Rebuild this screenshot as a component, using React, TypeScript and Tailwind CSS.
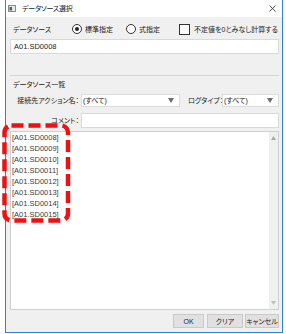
import React from "react";

const FONT = "[font-family:'Liberation_Sans','Noto_Sans_CJK_JP',sans-serif] [font-feature-settings:'palt']";

function Radio({ checked }: { checked?: boolean }) {
  return (
    <span className="w-[10px] h-[10px] rounded-full border border-[#333] bg-white flex items-center justify-center shrink-0">
      {checked && <span className="w-[4px] h-[4px] rounded-full bg-[#222]" />}
    </span>
  );
}

function Combo({ className }: { className: string }) {
  return (
    <div className={`h-[13px] bg-white border border-[#dcdcdc] flex items-center justify-between ${className}`}>
      <span className="pl-[1px] text-[7px] text-[#222] leading-none whitespace-nowrap">(すべて)</span>
      <svg width="6" height="5" viewBox="0 0 6 5" className="mr-[5px]">
        <path d="M0 0 H6 L3 5 Z" fill="#6d6d6d" />
      </svg>
    </div>
  );
}

const items = [
  "[A01.SD0008]",
  "[A01.SD0009]",
  "[A01.SD0010]",
  "[A01.SD0011]",
  "[A01.SD0012]",
  "[A01.SD0013]",
  "[A01.SD0014]",
  "[A01.SD0015]",
];

export default function App() {
  return (
    <div className={`relative w-[286px] h-[334px] bg-white overflow-hidden whitespace-nowrap ${FONT}`}>
      <div className="ml-[5px] w-[278px] h-[333px] border-x border-b border-[#2a84d2] flex flex-col bg-[#f0f0f0]">
        {/* title bar */}
        <div className="h-[17px] bg-white flex items-center shrink-0">
          <svg width="8" height="7" viewBox="0 0 8 7" className="ml-[2px]">
            <rect x="0.5" y="0.5" width="7" height="6" fill="#e8e8e8" stroke="#8a8a8a" />
            <rect x="1.5" y="2" width="2.5" height="3.5" fill="#3a6f4a" />
          </svg>
          <span className="ml-[6px] text-[7px] text-[#222] leading-none tracking-[-0.2px]">データソース選択</span>
          <svg width="7" height="7" viewBox="0 0 7 7" className="ml-auto mr-[6px]">
            <path d="M0.5 0.5 L6.5 6.5 M6.5 0.5 L0.5 6.5" stroke="#333" strokeWidth="0.9" />
          </svg>
        </div>

        {/* body */}
        <div className="flex-1 flex flex-col pl-[4px] pr-[3px]">
          {/* row 1 */}
          <div className="mt-[4px] h-[16px] flex items-center text-[7px] text-[#222] leading-none">
            <span className="w-[62px] pl-[3px] shrink-0">データソース</span>
            <Radio checked />
            <span className="ml-[3px] w-[41px]">標準指定</span>
            <Radio />
            <span className="ml-[3px] w-[40px]">式指定</span>
            <span className="w-[11px] h-[11px] border border-[#333] bg-white shrink-0" />
            <span className="ml-[4px]">不定値を0とみなし計算する</span>
          </div>

          {/* text box */}
          <div className="mt-[2px] h-[15px] bg-white border border-[#d9d9d9] flex items-center pl-[3px] text-[7.5px] text-[#222] leading-none">
            A01.SD0008
          </div>

          {/* separator */}
          <div className="mt-[21px] h-px bg-[#d6d6d6]" />

          <div className="mt-[3px] h-[10px] flex items-center pl-[3px] text-[7px] text-[#222] leading-none">
            データソース一覧
          </div>

          {/* combos */}
          <div className="mt-[5px] h-[13px] flex items-center text-[7px] text-[#222] leading-none">
            <span className="w-[69px] text-right shrink-0">接続先アクション名：</span>
            <Combo className="ml-[2px] w-[99px] shrink-0" />
            <span className="ml-[8px] w-[34px] shrink-0">ログタイプ：</span>
            <Combo className="flex-1 min-w-0" />
          </div>

          {/* comment */}
          <div className="mt-[6px] h-[15px] flex items-center text-[7px] text-[#222] leading-none">
            <span className="w-[69px] text-right shrink-0">コメント：</span>
            <div className="ml-[2px] flex-1 h-[15px] bg-white border border-[#d9d9d9]" />
          </div>

          {/* list */}
          <div className="mt-[3px] h-[179px] bg-white border border-[#cfcfcf] flex">
            <div className="flex-1 pl-[1px] flex flex-col">
              {items.map((t) => (
                <div key={t} className="h-[11px] flex items-center text-[7.5px] text-[#3c3c3c] leading-none">
                  {t}
                </div>
              ))}
            </div>
            <div className="w-[9px] bg-[#f0f0f0] flex flex-col items-center justify-between py-[4px]">
              <svg width="5" height="4" viewBox="0 0 5 4">
                <path d="M0 4 L2.5 0 L5 4 Z" fill="#a8a8a8" />
              </svg>
              <svg width="5" height="4" viewBox="0 0 5 4">
                <path d="M0 0 L2.5 4 L5 0 Z" fill="#c0c0c0" />
              </svg>
            </div>
          </div>

          {/* buttons */}
          <div className="mt-[4px] h-[14px] flex justify-end items-center text-[7px] text-[#222] leading-none">
            <button className="w-[31px] h-[14px] bg-[#e1e1e1] border border-[#c9c9c9] flex items-center justify-center">OK</button>
            <button className="ml-[3px] w-[36px] h-[14px] bg-[#e1e1e1] border border-[#c9c9c9] flex items-center justify-center">クリア</button>
            <button className="ml-[2px] w-[34px] h-[14px] bg-[#e1e1e1] border border-[#c9c9c9] flex items-center justify-center whitespace-nowrap">キャンセル</button>
          </div>
        </div>
      </div>

      {/* red annotation overlay */}
      <svg className="absolute left-0 top-0 pointer-events-none" width="286" height="334">
        <rect x="4.5" y="125.5" width="63.5" height="95" rx="7" fill="none" stroke="#ee1111" strokeWidth="4.5" strokeDasharray="12 5" />
      </svg>
    </div>
  );
}
